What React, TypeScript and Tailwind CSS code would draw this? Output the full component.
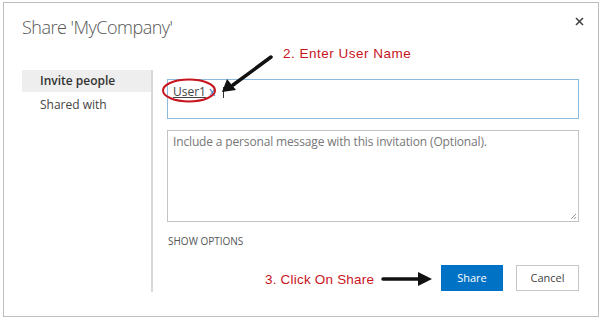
import React from 'react';

const App = () => {
    return (
        <div className="relative w-[605px] h-[323px] bg-white overflow-hidden font-['Open_Sans',sans-serif]">
            <div className="relative ml-[3px] mt-[2px] w-[596px] h-[315px] border border-[#bdbdbd] bg-white">
                <div className="pl-[18px] pt-[12px] text-[18px] leading-[24px] font-light tracking-[-0.5px] text-[#555]">
                    Share &apos;MyCompany&apos;
                </div>

                <div className="mt-[31px] flex">
                    <div className="ml-[18px] w-[129px]">
                        <div className="h-[22px] flex items-center pl-[18px] bg-[#eeeeee] text-[12px] font-semibold text-[#333]">
                            Invite people
                        </div>
                        <div className="mt-[2px] h-[22px] flex items-center pl-[18px] text-[12px] text-[#444]">
                            Shared with
                        </div>
                    </div>

                    <div className="w-[2px] h-[222px] bg-[#d8d8d8]" />

                    <div className="ml-[14px] w-[412px]">
                        <div className="mt-[9px] h-[40px] border border-[#8cbbde] pl-[5px] pt-[4px] text-[12px] leading-[16px]">
                            <span className="underline text-[#444]">User1</span>
                            <span className="ml-[3px] text-[#3b78c4]">x</span>
                        </div>

                        <div className="relative mt-[11px] h-[92px] border border-[#c4c4c4] pl-[5px] pt-[3px] text-[12px] leading-[16px] tracking-[-0.15px] text-[#777]">
                            Include a personal message with this invitation (Optional).
                            <svg className="absolute right-[1px] bottom-[1px]" width="7" height="7" viewBox="0 0 7 7">
                                <line x1="1" y1="6" x2="6" y2="1" stroke="#999" strokeWidth="1" />
                                <line x1="4" y1="6" x2="6" y2="4" stroke="#999" strokeWidth="1" />
                            </svg>
                        </div>

                        <div className="mt-[13px] pl-[1px] text-[10px] leading-[12px] text-[#555] uppercase">
                            Show options
                        </div>

                        <div className="mt-[18px] flex justify-end gap-[13px]">
                            <button className="w-[62px] h-[26px] bg-[#0072c6] text-white text-[11px]">
                                Share
                            </button>
                            <button className="w-[63px] h-[26px] border border-[#c6c6c6] bg-white text-[#444] text-[11px]">
                                Cancel
                            </button>
                        </div>
                    </div>
                </div>
            </div>

            {/* annotations drawn over the dialog */}
            <div className="absolute left-[283px] top-[45px] text-[13.5px] leading-[18px] text-[#c8141c] font-['Liberation_Sans',sans-serif] tracking-[0.5px]">
                2. Enter User Name
            </div>
            <div className="absolute left-[265px] top-[271px] text-[13.5px] leading-[18px] text-[#c8141c] font-['Liberation_Sans',sans-serif] tracking-[0.2px]">
                3. Click On Share
            </div>
            <div className="absolute left-[223px] top-[87px] w-[1px] h-[11px] bg-[#333]" />

            <svg className="absolute left-0 top-0 pointer-events-none" width="605" height="323" viewBox="0 0 605 323">
                <ellipse cx="189" cy="90.5" rx="26" ry="11" fill="none" stroke="#c8141c" strokeWidth="2" />
                <line x1="271" y1="57" x2="233" y2="85" stroke="#111" strokeWidth="3.5" strokeLinecap="round" />
                <polygon points="222,92 227,79 236,90" fill="#111" />
                <line x1="383" y1="279" x2="420" y2="279" stroke="#111" strokeWidth="3.5" strokeLinecap="round" />
                <polygon points="432,279 418,272 418,286" fill="#111" />
                <line x1="576" y1="18" x2="583" y2="25" stroke="#444" strokeWidth="1.6" />
                <line x1="583" y1="18" x2="576" y2="25" stroke="#444" strokeWidth="1.6" />
            </svg>
        </div>
    );
};

export default App;
